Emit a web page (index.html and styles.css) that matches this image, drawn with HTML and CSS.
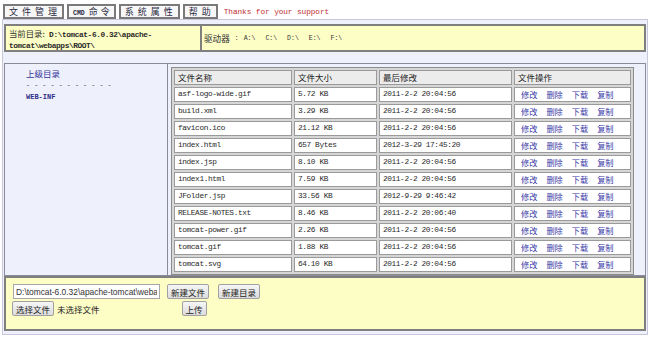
FILE: index.html
```html
<!DOCTYPE html>
<html lang="zh-CN">
<head>
  <meta charset="UTF-8">
  <title>JFolder</title>
  <link rel="stylesheet" href="styles.css">
</head>
<body>
  <!-- top menu -->
  <div class="menu">
    <span class="menu-item">文件管理</span>
    <span class="menu-item menu-cmd"><span class="latin">CMD</span>命令</span>
    <span class="menu-item">系统属性</span>
    <span class="menu-item">帮助</span>
    <span class="thanks">Thanks for your support</span>
  </div>

  <div class="main">
    <div class="path-bar">
      <div class="cur-dir">
        <span class="cjk">当前目录:</span> <b>D:\tomcat-6.0.32\apache-</b><br>
        <b>tomcat\webapps\ROOT\</b>
      </div>
      <div class="drives">
        <span class="cjk">驱动器</span> :
        <a href="#">A:\</a><a href="#">C:\</a><a href="#">D:\</a><a href="#">E:\</a><a href="#">F:\</a>
      </div>
    </div>

    <div class="browser">
      <div class="dir-panel">
        <a class="up-link" href="#">上级目录</a>
        <div class="dashes">- - - - - - - - - - -</div>
        <a class="dir-link" href="#">WEB-INF</a>
      </div>
      <div class="file-panel">
        <table class="file-table">
          <thead>
            <tr>
              <th class="col-name">文件名称</th>
              <th class="col-size">文件大小</th>
              <th class="col-date">最后修改</th>
              <th class="col-ops">文件操作</th>
            </tr>
          </thead>
          <tbody id="files"></tbody>
        </table>
      </div>
    </div>

    <div class="upload-bar">
      <div class="upload-row">
        <input class="path-input" type="text" value="D:\tomcat-6.0.32\apache-tomcat\webapps\ROOT\">
        <button class="btn">新建文件</button>
        <button class="btn btn-dir">新建目录</button>
      </div>
      <div class="upload-row">
        <button class="btn">选择文件</button>
        <span class="no-file">未选择文件</span>
        <button class="btn btn-upload">上传</button>
      </div>
    </div>
  </div>

  <script>
    // file list of the current folder
    const files = [
      ["asf-logo-wide.gif", "5.72 KB", "2011-2-2 20:04:56"],
      ["build.xml", "3.29 KB", "2011-2-2 20:04:56"],
      ["favicon.ico", "21.12 KB", "2011-2-2 20:04:56"],
      ["index.html", "657 Bytes", "2012-3-29 17:45:20"],
      ["index.jsp", "8.10 KB", "2011-2-2 20:04:56"],
      ["index1.html", "7.59 KB", "2011-2-2 20:04:56"],
      ["JFolder.jsp", "33.56 KB", "2012-9-29 9:46:42"],
      ["RELEASE-NOTES.txt", "8.46 KB", "2011-2-2 20:06:40"],
      ["tomcat-power.gif", "2.26 KB", "2011-2-2 20:04:56"],
      ["tomcat.gif", "1.88 KB", "2011-2-2 20:04:56"],
      ["tomcat.svg", "64.10 KB", "2011-2-2 20:04:56"]
    ];

    const tbody = document.getElementById("files");
    files.forEach(f => {
      const row = document.createElement("tr");
      row.innerHTML = `
        <td>${f[0]}</td>
        <td>${f[1]}</td>
        <td>${f[2]}</td>
        <td class="ops">
          <a href="#">修改</a><a href="#">删除</a><a href="#">下载</a><a href="#">复制</a>
        </td>
      `;
      tbody.appendChild(row);
    });
  </script>
</body>
</html>
```

FILE: styles.css
```css
/* General page */
body {
  margin: 0;
  background-color: #ffffff;
  font-family: "Liberation Mono", "Noto Sans CJK SC", monospace;
  font-size: 7.8px;
  color: #333333;
}

a {
  text-decoration: none;
}

.cjk {
  font-family: "Noto Sans CJK SC", sans-serif;
  font-size: 8.6px;
  letter-spacing: 0;
}

/* Top menu */
.menu {
  display: flex;
  align-items: center;
  gap: 3px;
  padding: 4px 3px 0;
  height: 15px;
}

.menu-item {
  box-sizing: border-box;
  height: 15px;
  padding: 0 1px 0 4px;
  border: 2px solid #7a7a7a;
  background-color: #f7f7f7;
  font-family: "Noto Sans CJK SC", sans-serif;
  font-size: 9px;
  line-height: 11px;
  letter-spacing: 4px;
  color: #2b2b45;
}

.menu-cmd {
  letter-spacing: 3px;
}

.menu-item .latin {
  margin-right: 4px;
  font-family: "Liberation Mono", monospace;
  font-size: 6.5px;
  letter-spacing: 0;
  font-weight: bold;
}

.thanks {
  margin-left: 3px;
  color: #c03030;
  font-size: 7.8px;
  letter-spacing: -0.1px;
}

/* Main frame */
.main {
  margin: 0 2px;
  padding: 4px 1px 3px;
  border: 1px solid #c8c8d8;
  background-color: #eef0fc;
}

.path-bar {
  display: flex;
  height: 28px;
  box-sizing: border-box;
  border: 2px solid #7f7f7f;
  background-color: #fdfdc6;
}

.cur-dir {
  width: 188px;
  padding: 2px 3px 0;
  border-right: 2px solid #7f7f7f;
  line-height: 10.5px;
  letter-spacing: -0.4px;
}

.cur-dir .cjk {
  font-size: 8.4px;
}

.cur-dir b {
  color: #2a2a2a;
}

.drives {
  display: flex;
  align-items: center;
  padding-left: 2px;
  gap: 5px;
  font-size: 6.5px;
}

.drives a {
  color: #333333;
  margin-right: 5px;
}

/* Folder / file browser */
.browser {
  display: flex;
  margin-top: 11px;
  border: 1px solid #8a8a9a;
  background-color: #eef0fc;
}

.dir-panel {
  width: 142px;
  padding: 3px 0 0 21px;
  border-right: 1px solid #8a8a9a;
}

.up-link {
  display: block;
  font-family: "Noto Sans CJK SC", sans-serif;
  font-size: 8.5px;
  line-height: 13px;
  color: #35359a;
}

.dashes {
  font-size: 6.8px;
  line-height: 11px;
  color: #444444;
}

.dir-link {
  display: block;
  line-height: 12px;
  font-weight: bold;
  font-size: 7px;
  color: #30308a;
}

.file-panel {
  flex: 1;
  padding: 3px 11px 0 3px;
}

.file-table {
  width: 463px;
  table-layout: fixed;
  border: 1px solid #8c8c8c;
  border-spacing: 2px;
  background-color: #d6d6d6;
}

.file-table th,
.file-table td {
  height: 13px;
  padding: 0 3px;
  border: 1px solid #9a9a9a;
  line-height: 13px;
  text-align: left;
  white-space: nowrap;
  overflow: hidden;
  letter-spacing: -0.4px;
}

.file-table th {
  background-color: #ececec;
  font-family: "Noto Sans CJK SC", sans-serif;
  font-size: 8.5px;
  font-weight: normal;
  letter-spacing: 0;
  color: #222222;
}

.file-table td {
  background-color: #ffffff;
  color: #2a2a2a;
}

.col-name { width: 110px; }
.col-size { width: 75px; }
.col-date { width: 125px; }

.ops {
  padding-left: 6px !important;
  font-family: "Noto Sans CJK SC", sans-serif;
  font-size: 8.2px;
  letter-spacing: 0 !important;
}

.ops a {
  color: #3a3aa8;
  margin-right: 9px;
}

/* Upload area */
.upload-bar {
  height: 55px;
  box-sizing: border-box;
  padding: 5px 0 0 6px;
  border: 2px solid #7f7f7f;
  background-color: #fdfdc6;
  font-family: "Liberation Sans", "Noto Sans CJK SC", sans-serif;
}

.upload-row {
  display: flex;
  align-items: center;
  height: 17px;
}

.path-input {
  box-sizing: border-box;
  width: 147px;
  height: 15px;
  margin: 0 7px 0 1px;
  padding: 0 2px;
  border: 1px solid #a8a8a8;
  background-color: #ffffff;
  font-family: "Liberation Sans", sans-serif;
  font-size: 8.4px;
  color: #333333;
}

.btn {
  box-sizing: border-box;
  height: 15px;
  padding: 0 3px;
  border: 1px solid #a0a0a0;
  border-radius: 2px;
  background: linear-gradient(#f6f6f6, #dcdcdc);
  font-family: "Noto Sans CJK SC", sans-serif;
  font-size: 8.5px;
  line-height: 12px;
  color: #222222;
}

.btn-dir {
  margin-left: 9px;
}

.no-file {
  margin-left: 3px;
  font-family: "Noto Sans CJK SC", sans-serif;
  font-size: 8.5px;
  color: #222222;
}

.btn-upload {
  margin-left: 82px;
}
```
